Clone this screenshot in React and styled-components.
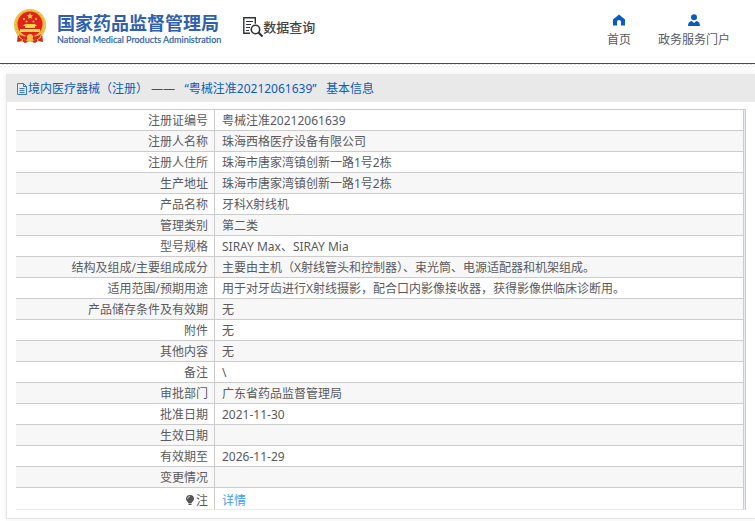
import React from "react";
import styled, { createGlobalStyle } from "styled-components";

const Global = createGlobalStyle`
  * { box-sizing: border-box; }
  body {
    margin: 0;
    background: #fff;
    color: #5a5a5e;
    font: 12px/20px "Noto Sans", "Noto Sans CJK SC", sans-serif;
  }
`;

const Header = styled.header`
  display: flex;
  align-items: flex-start;
  height: 64px;
  padding: 8px 25px 0 13px;
  border-bottom: 1px solid #0a5cad;
`;

const Brand = styled.a`
  display: flex;
  gap: 10px;
  color: #2f5fb0;
  text-decoration: none;
`;

const BrandText = styled.span`
  display: flex;
  flex-direction: column;
  padding-top: 3px;
`;

const BrandName = styled.strong`
  font: bold 18px/22px "Noto Sans CJK SC", sans-serif;
  white-space: nowrap;
`;

const BrandSub = styled.span`
  font: 9px/14px Lato, "Liberation Sans", sans-serif;
  white-space: nowrap;
  -webkit-text-stroke: 0.2px #2f5fb0;
`;

const Section = styled.h1`
  display: flex;
  align-items: center;
  margin: 8px 0 0 22px;
  font: 500 13px/22px "Noto Sans CJK SC", sans-serif;
  color: #444;
  white-space: nowrap;
`;

const Nav = styled.nav`
  display: flex;
  gap: 27px;
  margin-left: auto;
`;

const NavLink = styled.a`
  display: flex;
  flex-direction: column;
  align-items: center;
  gap: 4px;
  padding-top: 6px;
  color: #5a5a5e;
  text-decoration: none;
  white-space: nowrap;
`;

const Hatch = styled.div`
  height: 3px;
  background: conic-gradient(#ddd 25%, #fff 0 50%, #eee 0 75%, #fff 0) 0 0 / 4px 3px;
`;

const Card = styled.main`
  margin: 7px 0 2px 6px;
  border: 1px solid #e6e6e6;
  border-top: 0;
  border-right: 0;
  box-shadow: 0 0 6px rgba(0, 0, 0, 0.08);
`;

const CardTitle = styled.h2`
  display: flex;
  align-items: center;
  height: 28px;
  margin: 0;
  padding: 3px 9px 0;
  border-bottom: 1px solid #e6ebf5;
  background: #e9e9e9;
  color: #0a5cc0;
  font-size: 12px;
  font-weight: 400;
  white-space: pre;
`;

const TableFrame = styled.div`
  margin: 7px 9px 8px;
  padding-right: 1px;
  border-top: 1px solid #ccc;
  border-right: 1px solid #ccc;
  background: #e6ebf5;
`;

const Table = styled.table`
  width: 100%;
  border-spacing: 0;
  background: #fff;
  border-right: 1px solid #ccc;
  line-height: 18px;
`;

const Row = styled.tr`
  &:nth-child(even) { background: #f7f7f7; }
  &:last-child > * {
    height: 22px;
    padding-top: 5px;
    border-bottom-color: #e6ebf5;
    line-height: 16px;
  }
`;

const Label = styled.th`
  width: 199px;
  height: 21px;
  padding: 2px 6px 0 0;
  border-right: 1px solid #ccc;
  border-bottom: 1px solid #ccc;
  font-weight: 400;
  text-align: right;
`;

const Value = styled.td`
  padding: 2px 0 0 7px;
  border-bottom: 1px solid #ccc;
`;

const DetailLink = styled.a`
  color: #409eff;
  text-decoration: none;
`;

const BulbIcon = styled.svg`
  vertical-align: -1px;
  margin-right: 1px;
`;

const Emblem = () => (
  <svg width="34" height="36" viewBox="0 0 34 36" aria-hidden="true">
    <path d="M5 25 4 34l5-1 3 2 5-2 5 2 3-2 5 1-1-9z" fill="#d8241c" />
    <circle cx="17" cy="17" r="16" fill="#e9b93c" />
    <circle cx="17" cy="17" r="15" fill="none" stroke="#f6d65c" strokeDasharray="2 2" />
    <circle cx="17" cy="16" r="12.5" fill="#e3231b" />
    <path d="m17 5 .9 2.1 2.3.1-1.8 1.5.6 2.2-2-1.2-2 1.2.6-2.2-1.8-1.5 2.3-.1z" fill="#f8d54a" />
    <g fill="#f8d54a">
      <circle cx="11" cy="11" r="1" /><circle cx="23" cy="11" r="1" />
      <circle cx="13.5" cy="13.6" r="1" /><circle cx="20.5" cy="13.6" r="1" />
      <path d="M10 18h14l-2-2H12zM12 18h10v2H12zM7 21h20v3H7z" />
    </g>
    <path d="M12 20h10v1H12z" fill="#bd2418" />
    <path d="M6 26c3 3 7 3 11 1 4 2 8 2 11-1l-2 5-5 1-4-3-4 3-5-1z" fill="#d8241c" />
    <circle cx="17" cy="29" r="3" fill="#f2c744" />
    <path d="m6 29 4 3-3 2m21-5-4 3 3 2M14 33h6" fill="none" stroke="#f2c744" />
  </svg>
);

const SearchDoc = () => (
  <svg width="20" height="20" viewBox="0 0 20 20" fill="none" stroke="#30333c" aria-hidden="true">
    <path d="M7 16.3H.8V.8h11.500v6" strokeWidth="1.4" />
    <path d="M3 4.500h7M3 7.500h5M3 10.500h4M3 13.500h3" />
    <circle cx="12.5" cy="12.5" r="4.2" strokeWidth="1.6" />
    <path d="m15.500 15.500 4 4" strokeWidth="2.2" />
  </svg>
);

const HomeIcon = () => (
  <svg width="12" height="12" viewBox="0 0 12 12" fill="#0a5cc0" aria-hidden="true">
    <path d="M6 .5 12 5.500v6H8V8a2 2 0 0 0-4 0v3.500H0v-6z" />
  </svg>
);

const UserIcon = () => (
  <svg width="12" height="12" viewBox="0 0 12 12" fill="#0a5cc0" aria-hidden="true">
    <circle cx="6" cy="3.2" r="3" />
    <path d="M0 12c0-3 1.3-4.8 3.7-5L6 9l2.3-2c2.4.2 3.7 2 3.7 5z" />
  </svg>
);

const FileIcon = () => (
  <svg width="12" height="12" viewBox="0 0 12 12" fill="none" stroke="#0a5cc0" aria-hidden="true">
    <path d="M1.500.5h6l3 3v8h-9zM7.500.5v3h3M3.500 5.500h5M3.500 7.500h5M3.500 9.500h5" strokeWidth=".8" />
  </svg>
);

const Bulb = () => (
  <BulbIcon width="10" height="12" viewBox="0 0 10 12" aria-hidden="true">
    <path d="M5 1a4 4 0 0 0-4 4c0 2 2 2.6 2.4 4h3.2C7 7.600 9 7 9 5a4 4 0 0 0-4-4zM3.500 9.500h3V11h-3z" fill="#555" />
    <path d="M2.500 5A2.500 2.500 0 0 1 5 2.500" fill="none" stroke="#ddd" strokeWidth=".8" />
  </BulbIcon>
);

const rows = [
  ["注册证编号", "粤械注准20212061639"],
  ["注册人名称", "珠海西格医疗设备有限公司"],
  ["注册人住所", "珠海市唐家湾镇创新一路1号2栋"],
  ["生产地址", "珠海市唐家湾镇创新一路1号2栋"],
  ["产品名称", "牙科X射线机"],
  ["管理类别", "第二类"],
  ["型号规格", "SIRAY Max、SIRAY Mia"],
  ["结构及组成/主要组成成分", "主要由主机（X射线管头和控制器）、束光筒、电源适配器和机架组成。"],
  ["适用范围/预期用途", "用于对牙齿进行X射线摄影，配合口内影像接收器，获得影像供临床诊断用。"],
  ["产品储存条件及有效期", "无"],
  ["附件", "无"],
  ["其他内容", "无"],
  ["备注", "\\"],
  ["审批部门", "广东省药品监督管理局"],
  ["批准日期", "2021-11-30"],
  ["生效日期", ""],
  ["有效期至", "2026-11-29"],
  ["变更情况", ""],
];

export default function App() {
  return (
    <>
      <Global />
      <Header>
        <Brand href="#">
          <Emblem />
          <BrandText>
            <BrandName>国家药品监督管理局</BrandName>
            <BrandSub>National Medical Products Administration</BrandSub>
          </BrandText>
        </Brand>
        <Section><SearchDoc />数据查询</Section>
        <Nav>
          <NavLink href="#"><HomeIcon />首页</NavLink>
          <NavLink href="#"><UserIcon />政务服务门户</NavLink>
        </Nav>
      </Header>
      <Hatch />
      <Card>
        <CardTitle><FileIcon />境内医疗器械（注册） ——   “粤械注准20212061639”   基本信息</CardTitle>
        <TableFrame>
          <Table>
            <tbody>
              {rows.map(([label, value]) => (
                <Row key={label}>
                  <Label scope="row">{label}</Label>
                  <Value>{value}</Value>
                </Row>
              ))}
              <Row>
                <Label scope="row"><Bulb />注</Label>
                <Value><DetailLink href="#">详情</DetailLink></Value>
              </Row>
            </tbody>
          </Table>
        </TableFrame>
      </Card>
    </>
  );
}
